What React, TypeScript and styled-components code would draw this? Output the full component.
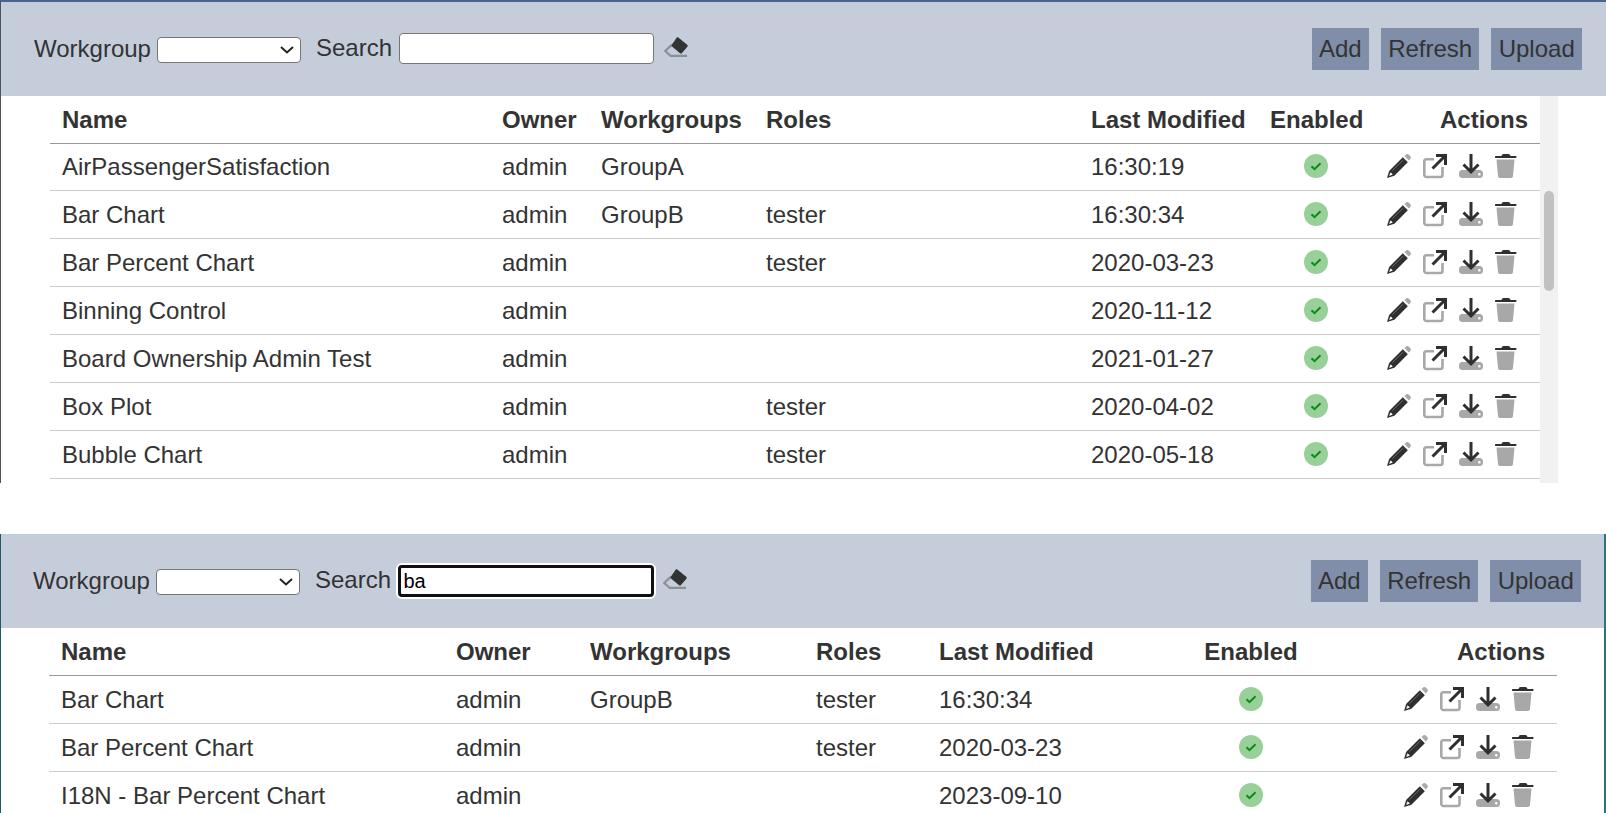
import React from "react";
import styled, { createGlobalStyle } from "styled-components";

const Global = createGlobalStyle`
  html, body { margin: 0; padding: 0; height: 100%; background: #fff; overflow: hidden; }
  body { font-family: "Liberation Sans", Arial, sans-serif; color: #333; }
`;

const Page = styled.div`
  display: flex;
  flex-direction: column;
  gap: 51px;
  height: 813px;
  width: 1606px;
  overflow: hidden;
`;

const Panel = styled.section<{ $second?: boolean }>`
  display: flex;
  flex-direction: column;
  box-sizing: border-box;
  flex: none;
  overflow: hidden;
  height: ${(p) => (p.$second ? "279px" : "483px")};
  border-left: 1px solid ${(p) => (p.$second ? "#1f5a66" : "#4a5560")};
  border-right: ${(p) => (p.$second ? "2px solid #1c7a85" : "none")};
  border-top: ${(p) => (p.$second ? "none" : "2px solid #4a6491")};
`;

const Toolbar = styled.div<{ $second?: boolean }>`
  flex: none;
  box-sizing: border-box;
  height: 94px;
  background: #c5cddb;
  display: flex;
  align-items: center;
  justify-content: space-between;
  padding: 0 ${(p) => (p.$second ? "23px" : "24px")} 0 ${(p) => (p.$second ? "32px" : "33px")};
`;

const Filters = styled.div`
  display: flex;
  align-items: center;
`;

const Label = styled.label`
  font-size: 24px;
  line-height: 28px;
  color: #333;
`;

const SearchLabel = styled(Label)`
  margin-top: -2px;
`;

const SelectWrap = styled.div`
  position: relative;
  flex: none;
  width: 144px;
  height: 26px;
  margin: 2px 15px 0 6px;
`;

const SelectBox = styled.select`
  display: block;
  appearance: none;
  box-sizing: border-box;
  width: 100%;
  height: 100%;
  background: #fff;
  border: 1px solid #767676;
  border-radius: 4px;
`;

const Chevron = styled.svg`
  position: absolute;
  right: 7px;
  top: 9px;
  width: 14px;
  height: 8px;
  pointer-events: none;
`;

const SearchInput = styled.input<{ $focused?: boolean }>`
  box-sizing: border-box;
  flex: none;
  width: ${(p) => (p.$focused ? "255.5px" : "255px")};
  height: ${(p) => (p.$focused ? "32px" : "31px")};
  margin: ${(p) => (p.$focused ? "0 9.5px 0 7px" : "-2px 10px 0 7px")};
  padding: ${(p) => (p.$focused ? "0 2.5px" : "0 5px")};
  font-family: "Liberation Sans", Arial, sans-serif;
  font-size: 20px;
  color: #000;
  background: #fff;
  border-radius: 4px;
  outline: none;
  border: ${(p) => (p.$focused ? "3px solid #101010" : "1px solid #767676")};
  box-shadow: ${(p) => (p.$focused ? "0 0 0 2px #fff" : "none")};
`;

const EraserIcon = styled.svg`
  width: 24px;
  height: 21px;
  flex: none;
  margin-top: -4px;
`;

const Buttons = styled.div`
  display: flex;
  gap: 12px;
`;

const Button = styled.button`
  height: 42px;
  padding: 0 7.25px;
  border: none;
  background: #808ea9;
  color: #333;
  font-family: "Liberation Sans", Arial, sans-serif;
  font-size: 24px;
`;

const Body = styled.div<{ $second?: boolean }>`
  flex: 1;
  display: flex;
  min-height: 0;
  padding-left: ${(p) => (p.$second ? "48px" : "49px")};
`;

const Table = styled.div<{ $width: number }>`
  width: ${(p) => p.$width}px;
  flex: none;
`;

const Row = styled.div<{ $columns: string; $header?: boolean; $tight?: boolean }>`
  display: grid;
  grid-template-columns: ${(p) => p.$columns};
  box-sizing: border-box;
  height: 47px;
  margin-bottom: ${(p) => (p.$tight ? "0" : "1px")};
  align-items: center;
  font-size: 24px;
  color: #333;
  font-weight: ${(p) => (p.$header ? 700 : 400)};
  box-shadow: 0 1px 0 ${(p) => (p.$header ? "#999" : "#ccc")};
`;

const Cell = styled.div<{ $align?: string }>`
  padding: 0 12px;
  white-space: nowrap;
  text-align: ${(p) => p.$align || "left"};
`;

const Icons = styled.div`
  display: flex;
  gap: 12px;
  padding-left: 12px;
  margin-top: -2px;
`;

const Icon = styled.svg`
  width: 24px;
  height: 24px;
  flex: none;
  display: block;
  overflow: visible;
`;

const Centered = styled.div`
  display: flex;
  justify-content: center;
  margin-top: -2px;
`;

const ScrollTrack = styled.div`
  width: 18px;
  flex: none;
  background: #f1f1f1;
  padding-top: 95px;
  box-sizing: border-box;
`;

const ScrollThumb = styled.div`
  width: 10px;
  height: 100px;
  margin-left: 4px;
  background: #c1c1c1;
  border-radius: 5px;
`;

const dark = "#2f2f2f";
const grey = "#a8a8a8";

const Check = () => (
  <Icon viewBox="0 0 24 24">
    <circle cx="12" cy="12" r="12" fill="#98d09a" />
    <path d="M7.500 12.200l3 3 6-6" fill="none" stroke="#0a8a1a" strokeWidth="2" />
  </Icon>
);

const Pencil = () => (
  <Icon viewBox="-1 0 24 24">
    <path d="M17.500 2l1.700-1.500c.8-.7 1.800-.6 2.500.1l1.700 1.700c.7.7.7 1.700 0 2.500L21.800 6.500z" fill={grey} />
    <path d="M15.800 3.300l5 5L7.400 21.700 0 24l2.300-7.300z" fill={dark} />
    <path d="M3.600 18.200l-1.500 3.700 3.700-1.500z" fill="#fff" />
    <path d="M5.500 16.500L16.500 5.800" stroke="#6a6a6a" strokeWidth="1" fill="none" />
  </Icon>
);

const External = () => (
  <Icon viewBox="-1 0 24 24">
    <path d="M11 5.300H3.500a2.200 2.200 0 0 0-2.200 2.200v13.300a2.200 2.200 0 0 0 2.200 2.200h13.800a2.200 2.200 0 0 0 2.200-2.200V13" fill="none" stroke={grey} strokeWidth="2.600" />
    <path d="M9.500 14.500L21.500 2.500M13 1.500h9.500V11" fill="none" stroke={dark} strokeWidth="3" />
  </Icon>
);

const Download = () => (
  <Icon viewBox="-1 0 24 24">
    <path fillRule="evenodd" d="M3.500 16h17a3.500 3.500 0 0 1 3.500 3.500v1a3.500 3.500 0 0 1-3.500 3.500h-17A3.500 3.500 0 0 1 0 20.500v-1A3.500 3.500 0 0 1 3.500 16zm16.800 3a1.300 1.300 0 1 0 0 2.600 1.300 1.300 0 0 0 0-2.600z" fill={grey} />
    <path d="M12 0v18M4.500 10.500l7.500 7.500 7.500-7.500" fill="none" stroke={dark} strokeWidth="3" />
  </Icon>
);

const Trash = () => (
  <Icon viewBox="0 0 24 24">
    <path d="M7.500 2C7.800 .8 8.600 0 9.700 0h4.600c1.100 0 1.900 .8 2.200 2h5.500c.3 0 .5 .5 .5 1s-.2 1-.5 1H1.500C1.200 4 1 3.500 1 3s.2-1 .5-1z" fill={dark} />
    <path d="M2.500 5.500h18L19 22c-.1 1.200-1 2-2 2H6c-1 0-1.900-.8-2-2z" fill={grey} />
  </Icon>
);

const Eraser = () => (
  <EraserIcon viewBox="0 0 24 21">
    <path d="M8 7.600L1.200 14l5.300 4.800H23" fill="none" stroke="#8c8f96" strokeWidth="2.200" strokeLinejoin="round" />
    <path d="M12.600 .8c.6-.6 1.400-.6 2 0l8.600 7c.7.6 .7 1.400 .2 2l-5.400 6.200c-.5 .6-1.300 .7-1.900 .2L8 9.600c-.6-.5-.7-1.300-.2-1.900z" fill="#333" />
  </EraserIcon>
);

const Actions = () => (
  <Icons>
    <Pencil />
    <External />
    <Download />
    <Trash />
  </Icons>
);

type Item = [string, string, string, string, string];

const topRows: Item[] = [
  ["AirPassengerSatisfaction", "admin", "GroupA", "", "16:30:19"],
  ["Bar Chart", "admin", "GroupB", "tester", "16:30:34"],
  ["Bar Percent Chart", "admin", "", "tester", "2020-03-23"],
  ["Binning Control", "admin", "", "", "2020-11-12"],
  ["Board Ownership Admin Test", "admin", "", "", "2021-01-27"],
  ["Box Plot", "admin", "", "tester", "2020-04-02"],
  ["Bubble Chart", "admin", "", "tester", "2020-05-18"],
];

const bottomRows: Item[] = [
  ["Bar Chart", "admin", "GroupB", "tester", "16:30:34"],
  ["Bar Percent Chart", "admin", "", "tester", "2020-03-23"],
  ["I18N - Bar Percent Chart", "admin", "", "", "2023-09-10"],
];

const DataTable = ({
  columns,
  width,
  rows,
  tight,
}: {
  columns: string;
  width: number;
  rows: Item[];
  tight?: boolean;
}) => (
  <Table $width={width}>
    <Row $columns={columns} $header $tight={tight}>
      <Cell>Name</Cell>
      <Cell>Owner</Cell>
      <Cell>Workgroups</Cell>
      <Cell>Roles</Cell>
      <Cell>Last Modified</Cell>
      <Cell $align="center">Enabled</Cell>
      <Cell $align="right">Actions</Cell>
    </Row>
    {rows.map((r) => (
      <Row $columns={columns} key={r[0]}>
        <Cell>{r[0]}</Cell>
        <Cell>{r[1]}</Cell>
        <Cell>{r[2]}</Cell>
        <Cell>{r[3]}</Cell>
        <Cell>{r[4]}</Cell>
        <Centered>
          <Check />
        </Centered>
        <Actions />
      </Row>
    ))}
  </Table>
);

const Bar = ({ second, value }: { second?: boolean; value: string }) => (
  <Toolbar $second={second}>
    <Filters>
      <Label>Workgroup</Label>
      <SelectWrap>
        <SelectBox defaultValue="">
          <option value=""></option>
        </SelectBox>
        <Chevron viewBox="0 0 14 8">
          <path d="M1 1l6 5.500L13 1" fill="none" stroke="#222" strokeWidth="2" />
        </Chevron>
      </SelectWrap>
      <SearchLabel>Search</SearchLabel>
      <SearchInput $focused={second} defaultValue={value} />
      <Eraser />
    </Filters>
    <Buttons>
      <Button>Add</Button>
      <Button>Refresh</Button>
      <Button>Upload</Button>
    </Buttons>
  </Toolbar>
);

export default function App() {
  return (
    <Page>
      <Global />
      <Panel>
        <Bar value="" />
        <Body>
          <DataTable tight columns="440px 99px 165px 325px 179px 116px 166px" width={1490} rows={topRows} />
          <ScrollTrack>
            <ScrollThumb />
          </ScrollTrack>
        </Body>
      </Panel>
      <Panel $second>
        <Bar second value="ba" />
        <Body $second>
          <DataTable columns="395px 134px 226px 123px 184px 280px 166px" width={1508} rows={bottomRows} />
        </Body>
      </Panel>
    </Page>
  );
}
